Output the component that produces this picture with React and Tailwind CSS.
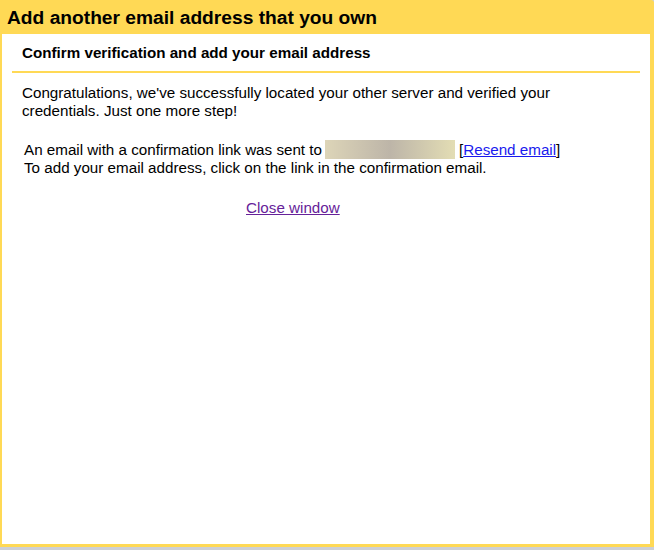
export default function App() {
  return (
    <div
      className="w-[654px] h-[550px] bg-[#cdd0d6] overflow-hidden"
      style={{ fontFamily: '"Liberation Sans", Arial, sans-serif' }}
    >
      <div className="w-[654px] h-[547px] bg-[#ffd955] pl-[2px] pr-[4px] pb-[3px] flex flex-col rounded-tr-[3px]">
        {/* dialog title bar */}
        <div className="h-[34px] flex items-center pl-[5px] pt-[1px]">
          <h1 className="text-[19.2px] font-bold text-black leading-none">
            Add another email address that you own
          </h1>
        </div>
        {/* dialog body */}
        <div className="flex-1 bg-white px-[10px]">
          <div className="border-b-2 border-[#ffd955] h-[39px] flex items-center pl-[10px] pt-[1px]">
            <h2 className="text-[15.2px] font-bold text-black leading-none">
              Confirm verification and add your email address
            </h2>
          </div>
          <p className="mt-[11px] pl-[10px] text-[15.2px] leading-[18px] text-black w-[560px]">
            Congratulations, we've successfully located your other server and verified your credentials. Just one more step!
          </p>
          <div className="mt-[20px] pl-[12px] text-[15.2px] leading-[18px] text-black">
            <div className="flex items-center">
              <span>An email with a confirmation link was sent to</span>
              <span className="inline-block ml-[3px] w-[130px] h-[19px] bg-gradient-to-r from-[#ddd5b8] via-[#bdb5a8] to-[#e3ddb4]" />
              <span className="ml-[4px]">
                [<a href="#" className="text-[#1a1aee] underline">Resend email</a>]
              </span>
            </div>
            <div>To add your email address, click on the link in the confirmation email.</div>
          </div>
          <div className="mt-[22px] pl-[234px] text-[15.2px] leading-[18px]">
            <a href="#" className="text-[#662299] underline">Close window</a>
          </div>
        </div>
      </div>
    </div>
  );
}
